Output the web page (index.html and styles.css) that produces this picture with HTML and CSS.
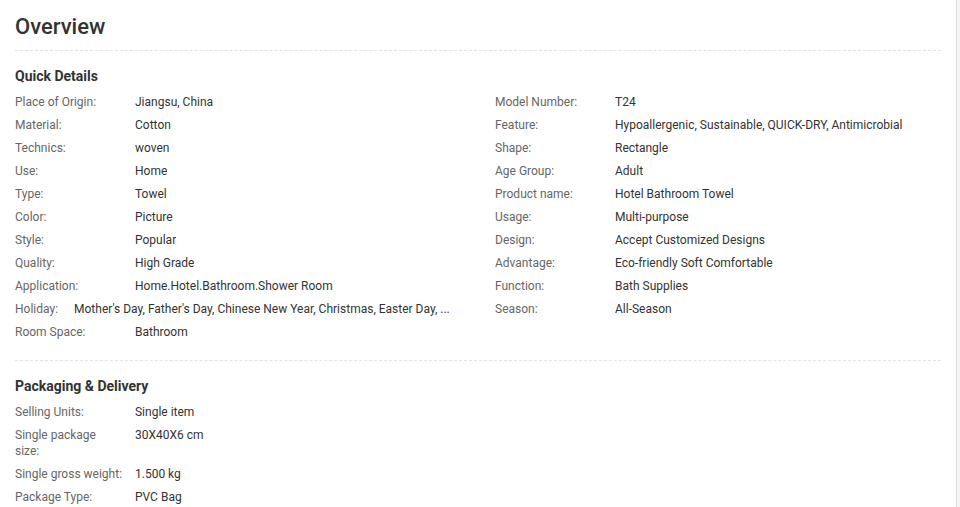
FILE: index.html
```html
<!DOCTYPE html>
<html>
	<head>
		<meta charset="UTF-8">
		<title>Overview</title>
		<link rel="stylesheet" href="styles.css">
	</head>
	<body>
		<div class="page">
			<h1 class="title">Overview</h1>

			<div class="section">
				<h3 class="section_title">Quick Details</h3>
				<div class="cols">
					<div class="col">
						<div class="row"><span class="label">Place of Origin:</span><span class="value">Jiangsu, China</span></div>
						<div class="row"><span class="label">Material:</span><span class="value">Cotton</span></div>
						<div class="row"><span class="label">Technics:</span><span class="value">woven</span></div>
						<div class="row"><span class="label">Use:</span><span class="value">Home</span></div>
						<div class="row"><span class="label">Type:</span><span class="value">Towel</span></div>
						<div class="row"><span class="label">Color:</span><span class="value">Picture</span></div>
						<div class="row"><span class="label">Style:</span><span class="value">Popular</span></div>
						<div class="row"><span class="label">Quality:</span><span class="value">High Grade</span></div>
						<div class="row"><span class="label">Application:</span><span class="value">Home.Hotel.Bathroom.Shower Room</span></div>
						<div class="row"><span class="label label_auto">Holiday:</span><span class="value">Mother's Day, Father's Day, Chinese New Year, Christmas, Easter Day, ...</span></div>
						<div class="row"><span class="label">Room Space:</span><span class="value">Bathroom</span></div>
					</div>
					<div class="col">
						<div class="row"><span class="label">Model Number:</span><span class="value">T24</span></div>
						<div class="row"><span class="label">Feature:</span><span class="value">Hypoallergenic, Sustainable, QUICK-DRY, Antimicrobial</span></div>
						<div class="row"><span class="label">Shape:</span><span class="value">Rectangle</span></div>
						<div class="row"><span class="label">Age Group:</span><span class="value">Adult</span></div>
						<div class="row"><span class="label">Product name:</span><span class="value">Hotel Bathroom Towel</span></div>
						<div class="row"><span class="label">Usage:</span><span class="value">Multi-purpose</span></div>
						<div class="row"><span class="label">Design:</span><span class="value">Accept Customized Designs</span></div>
						<div class="row"><span class="label">Advantage:</span><span class="value">Eco-friendly Soft Comfortable</span></div>
						<div class="row"><span class="label">Function:</span><span class="value">Bath Supplies</span></div>
						<div class="row"><span class="label">Season:</span><span class="value">All-Season</span></div>
					</div>
				</div>
			</div>

			<div class="section">
				<h3 class="section_title">Packaging &amp; Delivery</h3>
				<div class="col">
					<div class="row"><span class="label">Selling Units:</span><span class="value">Single item</span></div>
					<div class="row"><span class="label">Single package size:</span><span class="value">30X40X6 cm</span></div>
					<div class="row"><span class="label">Single gross weight:</span><span class="value">1.500 kg</span></div>
					<div class="row"><span class="label">Package Type:</span><span class="value">PVC Bag</span></div>
				</div>
			</div>
		</div>
	</body>
</html>
```

FILE: styles.css
```css
html, body {
	margin: 0;
	padding: 0;
}

body {
	background-color: #f4f3f8;
	font-family: Roboto, "Liberation Sans", Arial, sans-serif;
	color: #333;
}

.page {
	width: 926px;
	min-height: 507px;
	padding: 0 15px 0 15px;
	background-color: #fff;
	border-right: 1px solid #dcdcdc;
}

.title {
	margin: 0;
	padding: 13px 0 9px 0;
	font-size: 22px;
	font-weight: 500;
	line-height: 28px;
	color: #333;
	border-bottom: 1px dashed #e3e3e3;
}

.section {
	padding-top: 16px;
	padding-bottom: 16px;
	border-bottom: 1px dashed #e3e3e3;
}

.section:last-child {
	border-bottom: none;
}

.section_title {
	margin: 0 0 6px 0;
	font-size: 14px;
	font-weight: 700;
	line-height: 18px;
	color: #333;
}

.cols {
	display: grid;
	grid-template-columns: 480px 1fr;
}

.row {
	display: flex;
	padding: 3px 0 4px 0;
	font-size: 12px;
	line-height: 16px;
}

.label {
	flex: none;
	width: 120px;
	color: #666;
}

/* 节日那行标签不占固定宽度 */
.label_auto {
	width: auto;
	margin-right: 16px;
}

.value {
	color: #333;
	white-space: nowrap;
	overflow: hidden;
}

/* 包装区的标签窄一点，长的会换行 */
.section:last-child .label {
	width: 107.8px;
	padding-right: 12.2px;
}
```
